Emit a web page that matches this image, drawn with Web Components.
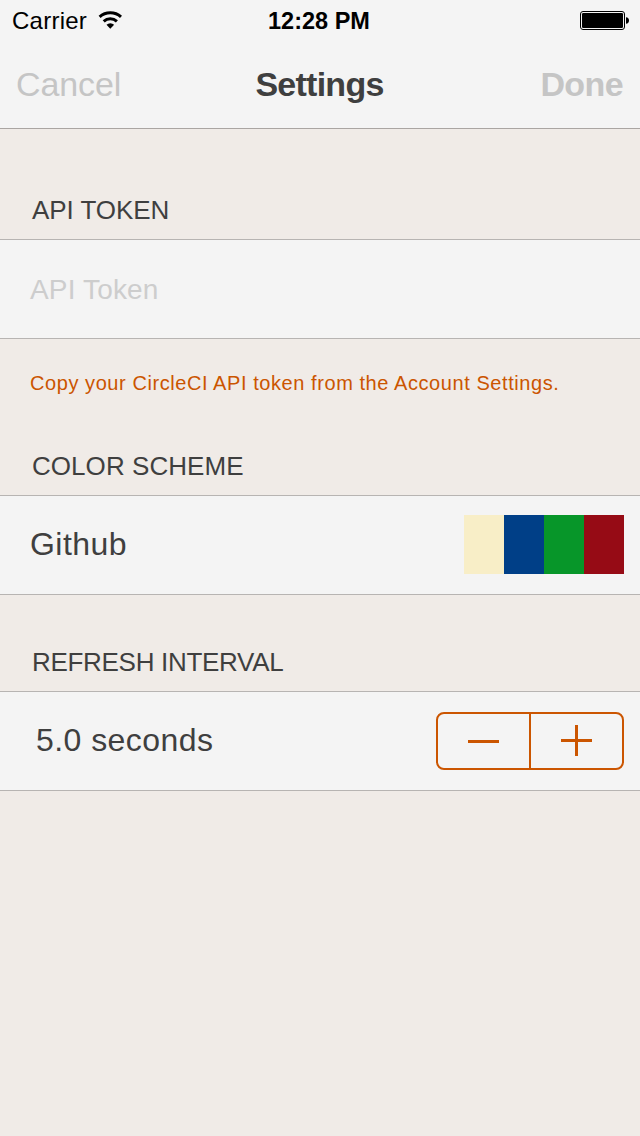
<!DOCTYPE html>
<html lang="en">
<head>
<meta charset="utf-8">
<title>Settings</title>
<style>
  body { margin: 0; background: #f0ebe7; color: #3f3f3f; font-family: "Liberation Sans", Arial, sans-serif; }
</style>
</head>
<body>
<settings-screen></settings-screen>
<script>
const define = (name, html) => {
  const template = document.createElement('template');
  template.innerHTML = html;
  customElements.define(name, class extends HTMLElement {
    constructor() {
      super();
      this.attachShadow({ mode: 'open' }).append(template.content.cloneNode(true));
    }
  });
};

define('wifi-icon', `
  <style>:host { display: block; width: 27px; height: 20px; } svg { display: block; }</style>
  <svg width="27" height="20" viewBox="0 0 27 20">
    <g fill="none" stroke="#000" stroke-width="3">
      <path d="M2.6 6.8a16 16 0 0 1 21.4 0"/>
      <path d="M6.7 11.4a9.8 9.8 0 0 1 13.2 0"/>
    </g>
    <path d="M9.5 14.8a5.5 5.5 0 0 1 7.6 0l-3.8 4z"/>
  </svg>`);

define('battery-icon', `
  <style>:host { display: block; width: 50px; height: 20px; } svg { display: block; }</style>
  <svg width="50" height="20" viewBox="0 0 50 20">
    <rect x=".5" y=".5" width="44" height="18" rx="2.5" fill="none" stroke="#000"/>
    <rect x="2" y="2" width="41" height="15" rx="1.2"/>
    <path d="M46 6.2c2 0 3 1.5 3 3.3s-1 3.3-3 3.3z"/>
  </svg>`);

define('status-bar', `
  <style>
    :host { display: grid; grid-template-columns: 1fr auto 1fr; height: 40px; line-height: 42px; font-size: 24px; color: #000; }
    .carrier { display: flex; padding-left: 12px; letter-spacing: .25px; }
    wifi-icon { margin: 10px 0 0 10px; }
    .time { font-weight: bold; font-size: 23.5px; margin-right: 2px; }
    battery-icon { justify-self: end; margin: 11px 10px 0 0; }
  </style>
  <div class="carrier"><span>Carrier</span><wifi-icon></wifi-icon></div>
  <div class="time">12:28 PM</div>
  <battery-icon></battery-icon>`);

define('nav-bar', `
  <style>
    :host { display: grid; grid-template-columns: 1fr auto 1fr; height: 88px; line-height: 88px; font-size: 34px; padding: 0 17px 0 16px; border-bottom: 1px solid #aaa5a2; }
    .side { color: #c5c5c5; letter-spacing: -.1px; }
    .title { font-weight: bold; letter-spacing: -.75px; }
    .done { font-weight: bold; justify-self: end; letter-spacing: -.6px; }
  </style>
  <div class="side"><slot name="left"></slot></div>
  <div class="title"><slot></slot></div>
  <div class="side done"><slot name="right"></slot></div>`);

define('settings-section', `
  <style>
    :host { display: block; }
    .head { height: var(--head); display: flex; align-items: flex-end; padding-left: 32px; font-size: 26px; line-height: 58px; letter-spacing: var(--head-spacing, 0); white-space: nowrap; }
    .row { height: 98px; display: flex; align-items: center; justify-content: space-between; padding: 0 16px 0 30px; background: #f4f4f4; border: solid #b7b4b2; border-width: 1px 0; }
    ::slotted([slot=note]) { display: block; padding-left: 30px; font-size: 20px; line-height: 88px; height: 60px; letter-spacing: .57px; color: #cb5500; white-space: nowrap; }
  </style>
  <div class="head"><slot name="head"></slot></div>
  <div class="row"><slot></slot></div>
  <slot name="note"></slot>`);

define('row-label', `
  <style>:host { display: block; font-size: 32px; line-height: 96px; padding-bottom: 2px; letter-spacing: .45px; white-space: nowrap; }</style>
  <slot></slot>`);

define('color-swatches', `
  <style>
    :host { display: flex; height: 59px; padding-bottom: 1px; }
    i { width: 40px; }
  </style>
  <i style="background:#f8eec7"></i><i style="background:#003f87"></i><i style="background:#079629"></i><i style="background:#960b15"></i>`);

define('value-stepper', `
  <style>
    :host { display: flex; box-sizing: border-box; width: 188px; height: 58px; border: 2px solid #cb5500; border-radius: 8px; }
    div { flex: 1; }
    div + div { border-left: 2px solid #cb5500; }
    svg { display: block; }
  </style>
  <div><svg width="91" height="54"><path d="M30 26h31v3H30z" fill="#cb5500"/></svg></div>
  <div><svg width="91" height="54"><path d="M30 25h14V11h3v14h14v3H47v14h-3V28H30z" fill="#cb5500"/></svg></div>`);

define('settings-screen', `
  <style>
    :host { display: flex; flex-direction: column; height: 1136px; width: 640px; overflow: hidden; }
    header { background: #f4f4f4; }
    .token { --head: 110px; --head-spacing: -.05px; }
    .token row-label { font-size: 28px; line-height: 98px; padding: 2px 0 0; color: #cdcdcd; letter-spacing: .15px; }
    .scheme { --head: 96px; --head-spacing: .05px; }
    .refresh { --head: 96px; --head-spacing: -.3px; }
    .refresh row-label { padding-left: 6px; }
  </style>
  <header>
    <status-bar></status-bar>
    <nav-bar><span slot="left">Cancel</span>Settings<span slot="right">Done</span></nav-bar>
  </header>
  <settings-section class="token">
    <span slot="head">API TOKEN</span>
    <row-label>API Token</row-label>
    <span slot="note">Copy your CircleCI API token from the Account Settings.</span>
  </settings-section>
  <settings-section class="scheme">
    <span slot="head">COLOR SCHEME</span>
    <row-label>Github</row-label>
    <color-swatches></color-swatches>
  </settings-section>
  <settings-section class="refresh">
    <span slot="head">REFRESH INTERVAL</span>
    <row-label>5.0 seconds</row-label>
    <value-stepper></value-stepper>
  </settings-section>`);
</script>
</body>
</html>
